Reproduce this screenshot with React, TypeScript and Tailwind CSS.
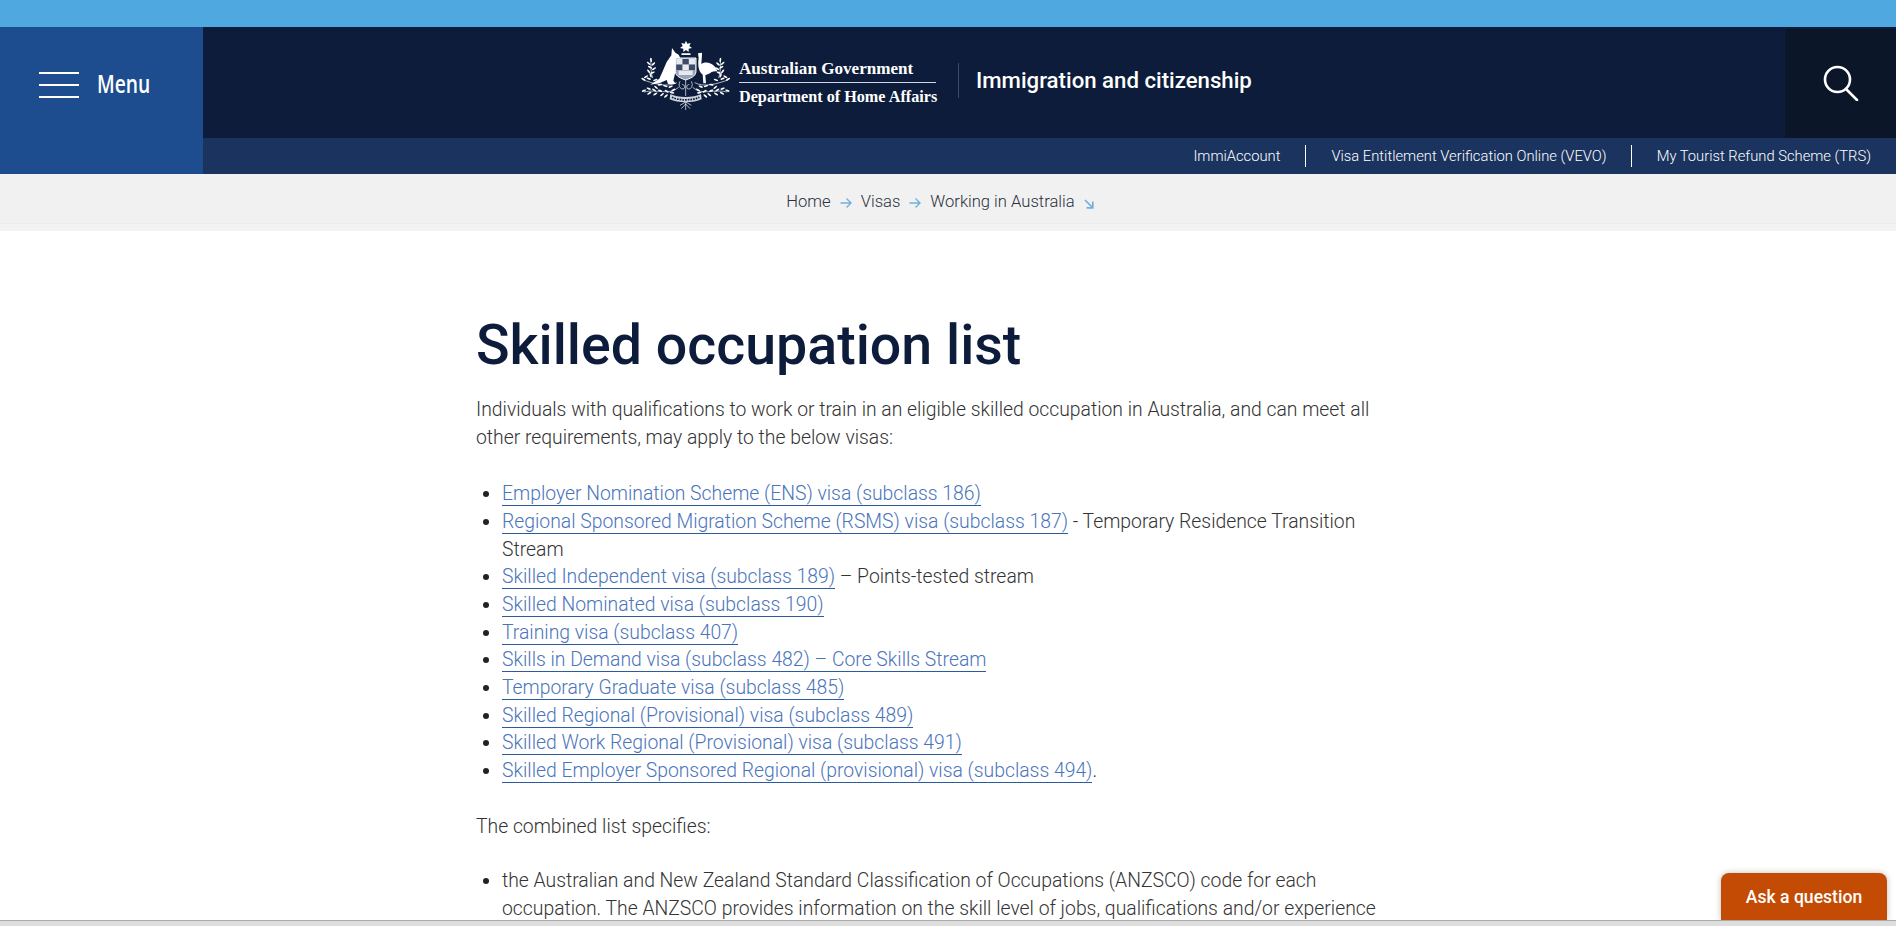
import React from "react";

const Arms = () => {
  const half: [number, number, number][] = [
    [45, 78, 80], [38, 88, 40], [52, 90, -40], [42, 100, 30], [54, 104, -30], [38, 112, 50], [50, 116, -20], [44, 124, 70],
    [30, 128, -30], [22, 136, 30], [38, 134, 20], [58, 138, -20], [72, 152, -10], [88, 156, 20], [104, 158, -20],
    [24, 170, -20], [38, 164, 20], [40, 178, -30], [54, 168, 30], [58, 180, -30], [72, 170, 20], [78, 182, -40], [92, 172, 30], [90, 186, -40], [108, 176, 10],
    [60, 160, 40], [112, 168, -30],
  ];
  const leaves: [number, number, number][] = [...half, ...half.map(([x, y, r]): [number, number, number] => [298 - x, y, -r])];
  return (
    <svg viewBox="0 0 300 240" className="w-[100px] h-[80px] shrink-0" fill="#fff">
      <polygon points="150,20 154,29 164,27 160,36 168,42 158,44 158,54 150,48 142,54 142,44 132,42 140,36 136,27 146,29" />
      <rect x="136" y="58" width="28" height="5" rx="2" />
      <path d="M108 42 L118 56 L128 62 L134 74 L122 76 L120 92 L118 115 L112 140 L120 150 L96 150 L92 138 L70 148 L42 152 L70 134 L80 112 L92 84 L106 64 Z" />
      <path d="M186 58 L198 56 L198 62 L196 90 C215 78 238 92 244 112 C236 112 228 112 222 118 L208 124 L210 148 L202 148 L200 122 C190 114 184 100 188 72 Z" />
      <path d="M118 72 H180 V112 C180 128 160 134 149 138 C138 134 118 128 118 112 Z" fill="#9aa3b5" stroke="#fff" strokeWidth="3" />
      <g>
        <rect x="121" y="75" width="18" height="16" fill="#e6e9ef" />
        <rect x="140" y="75" width="18" height="16" fill="#3d4b69" />
        <rect x="159" y="75" width="18" height="16" fill="#e6e9ef" />
        <rect x="121" y="92" width="18" height="16" fill="#3d4b69" />
        <rect x="140" y="92" width="18" height="16" fill="#e6e9ef" />
        <rect x="159" y="92" width="18" height="16" fill="#3d4b69" />
        <rect x="128" y="110" width="42" height="13" fill="#e6e9ef" />
      </g>
      <g fill="none" stroke="#fff" strokeWidth="2">
        <path d="M122 146 C92 162 52 148 22 138 M176 146 C206 162 246 148 276 138" />
        <path d="M128 160 C100 186 62 164 24 174 M170 160 C198 186 236 164 274 174" />
        <path d="M45 72 C44 95 44 115 50 132 M253 72 C254 95 254 115 248 132" />
        <path d="M132 142 C124 158 136 168 144 164 C148 158 144 150 138 152 M166 142 C174 158 162 168 154 164 C150 158 154 150 160 152" />
        <path d="M149 138 V186 M149 200 V228 M149 210 L136 224 M149 210 L162 224 M149 204 L132 214 M149 204 L166 214" />
      </g>
      <path d="M103 180 C125 192 173 192 195 180 L197 196 C173 208 125 208 101 196 Z" fill="#cdd2dc" />
      <path d="M108 190 C130 200 168 200 190 190" stroke="#0c1c3a" strokeWidth="5" strokeDasharray="5 3" fill="none" />
      {leaves.map(([x, y, r], i) => (
        <ellipse key={i} cx={x} cy={y} rx="7" ry="2.6" transform={`rotate(${r} ${x} ${y})`} />
      ))}
    </svg>
  );
};

const Arrow = () => (
  <svg viewBox="0 0 12 12" className="w-3 h-3 shrink-0" fill="none" stroke="#74aedb" strokeWidth="1.4">
    <path d="M0.5 6 H11 M6.5 1.5 L11 6 L6.5 10.5" />
  </svg>
);

const A = ({ children }: { children: React.ReactNode }) => (
  <a href="#" className="text-[#4a74bb] border-b border-[#2c5a9f]">{children}</a>
);

export default function App() {
  return (
    <div className="h-screen overflow-hidden relative flex flex-col bg-white font-[Roboto,sans-serif]">
      <div className="h-[27px] shrink-0 bg-[#4fa8e0]" />

      <header className="h-[147px] shrink-0 flex">
        <div className="w-[203px] shrink-0 bg-[#1d4d8f] border-b-2 border-[#1c4a8c] pl-[39px] pt-[45px] flex items-start gap-[18px]">
          <div className="w-[40px] h-[26px] flex flex-col justify-between">
            <div className="h-[2px] bg-white" />
            <div className="h-[2px] bg-white" />
            <div className="h-[2px] bg-white" />
          </div>
          <span className="text-white text-[25px] leading-[24px] -mt-px font-semibold font-['Open_Sans',sans-serif] w-[54px] inline-block origin-left scale-x-[0.77] whitespace-nowrap">Menu</span>
        </div>

        <div className="flex-1 flex flex-col min-w-0">
          <div className="h-[111px] bg-[#0c1c3a] flex">
            <div className="flex-1 flex items-start pl-[433px] pt-[7px]">
              <Arms />
              <div className="ml-[3px] mt-[25px] w-[197px] text-white font-['Liberation_Serif',serif] font-bold">
                <div className="text-[17.1px] leading-[20px] whitespace-nowrap pb-[3px] border-b border-[#cfd6e4]">Australian Government</div>
                <div className="text-[16.2px] leading-[20px] whitespace-nowrap pt-[4px]">Department of Home Affairs</div>
              </div>
              <div className="ml-[22px] mt-[29px] w-px h-[35px] bg-[#3a4a68]" />
              <div className="ml-[17px] mt-[32px] text-white text-[22.2px] leading-[28px] font-medium whitespace-nowrap">Immigration and citizenship</div>
            </div>
            <div className="w-[111px] shrink-0 mt-[2px] bg-[#0b1628] flex items-start pl-[38px] pt-[36px]">
              <svg viewBox="0 0 36 36" className="w-[36px] h-[36px]" fill="none" stroke="#fff" strokeWidth="2.6" strokeLinecap="round">
                <circle cx="14.5" cy="14.5" r="12.5" />
                <path d="M23 24 L34 35" />
              </svg>
            </div>
          </div>
          <nav className="h-[36px] bg-[#1b335f] flex items-center justify-end pr-[25px] text-white text-[14.75px] font-light whitespace-nowrap">
            <a href="#" className="pr-[25px] leading-[22px] border-r border-white">ImmiAccount</a>
            <a href="#" className="pl-[25px] pr-[24px] leading-[22px] border-r border-white">Visa Entitlement Verification Online (VEVO)</a>
            <a href="#" className="pl-[25px] leading-[22px]">My Tourist Refund Scheme (TRS)</a>
          </nav>
        </div>
      </header>

      <div className="h-[57px] shrink-0 bg-[#f1f1f1] pr-[16px] shadow-[inset_0_-7px_0_#f3f3f3,inset_0_-8px_0_#ebebeb] flex items-center justify-center gap-[9px] text-[16.6px] font-light text-[#2a3040]">
        <span>Home</span>
        <Arrow />
        <span>Visas</span>
        <Arrow />
        <span>Working in Australia</span>
        <svg viewBox="0 0 10 10" className="w-[10px] h-[10px] mt-[2px]" fill="none" stroke="#74aedb" strokeWidth="1.7">
          <path d="M1 1 L8.5 8.5 M8.8 2.5 V8.8 H2.5" />
        </svg>
      </div>

      <main className="flex-1 min-h-0 overflow-hidden pl-[476px]">
        <div className="w-[910px] pt-[80px] text-[19.35px] leading-[27.7px] font-light text-[#333]">
          <h1 className="text-[55.5px] leading-[70px] font-medium text-[#0c1c3a] mb-[15px] whitespace-nowrap">Skilled occupation list</h1>
          <p className="mb-[28.7px]">Individuals with qualifications to work or train in an eligible skilled occupation in Australia, and can meet all other requirements, may apply to the below visas:</p>
          <ul className="list-disc pl-[26px] mb-[27.7px] marker:text-[#222]">
            <li><A>Employer Nomination Scheme (ENS) visa (subclass 186)</A></li>
            <li><A>Regional Sponsored Migration Scheme (RSMS) visa (subclass 187)</A> - Temporary Residence Transition Stream</li>
            <li><A>Skilled Independent visa (subclass 189)</A> – Points-tested stream</li>
            <li><A>Skilled Nominated visa (subclass 190)</A></li>
            <li><A>Training visa (subclass 407)</A></li>
            <li><A>Skills in Demand visa (subclass 482) – Core Skills Stream</A></li>
            <li><A>Temporary Graduate visa (subclass 485)</A></li>
            <li><A>Skilled Regional (Provisional) visa (subclass 489)</A></li>
            <li><A>Skilled Work Regional (Provisional) visa (subclass 491)</A></li>
            <li><A>Skilled Employer Sponsored Regional (provisional) visa (subclass 494)</A>.</li>
          </ul>
          <p className="mb-[27px]">The combined list specifies:</p>
          <ul className="list-disc pl-[26px] marker:text-[#222]">
            <li>the Australian and New Zealand Standard Classification of Occupations (ANZSCO) code for each occupation. The ANZSCO provides information on the skill level of jobs, qualifications and/or experience</li>
          </ul>
        </div>
      </main>

      <div className="h-[6px] shrink-0 bg-[#dcdddc] border-t border-[#aaaaaa] relative z-10" />

      <button className="absolute right-[9px] bottom-[6px] w-[166px] h-[47px] pt-[1px] bg-[#c44b04] rounded-t-lg text-white text-[17.6px] font-medium shadow-[0_0_6px_rgba(0,0,0,0.25)]">Ask a question</button>
    </div>
  );
}
